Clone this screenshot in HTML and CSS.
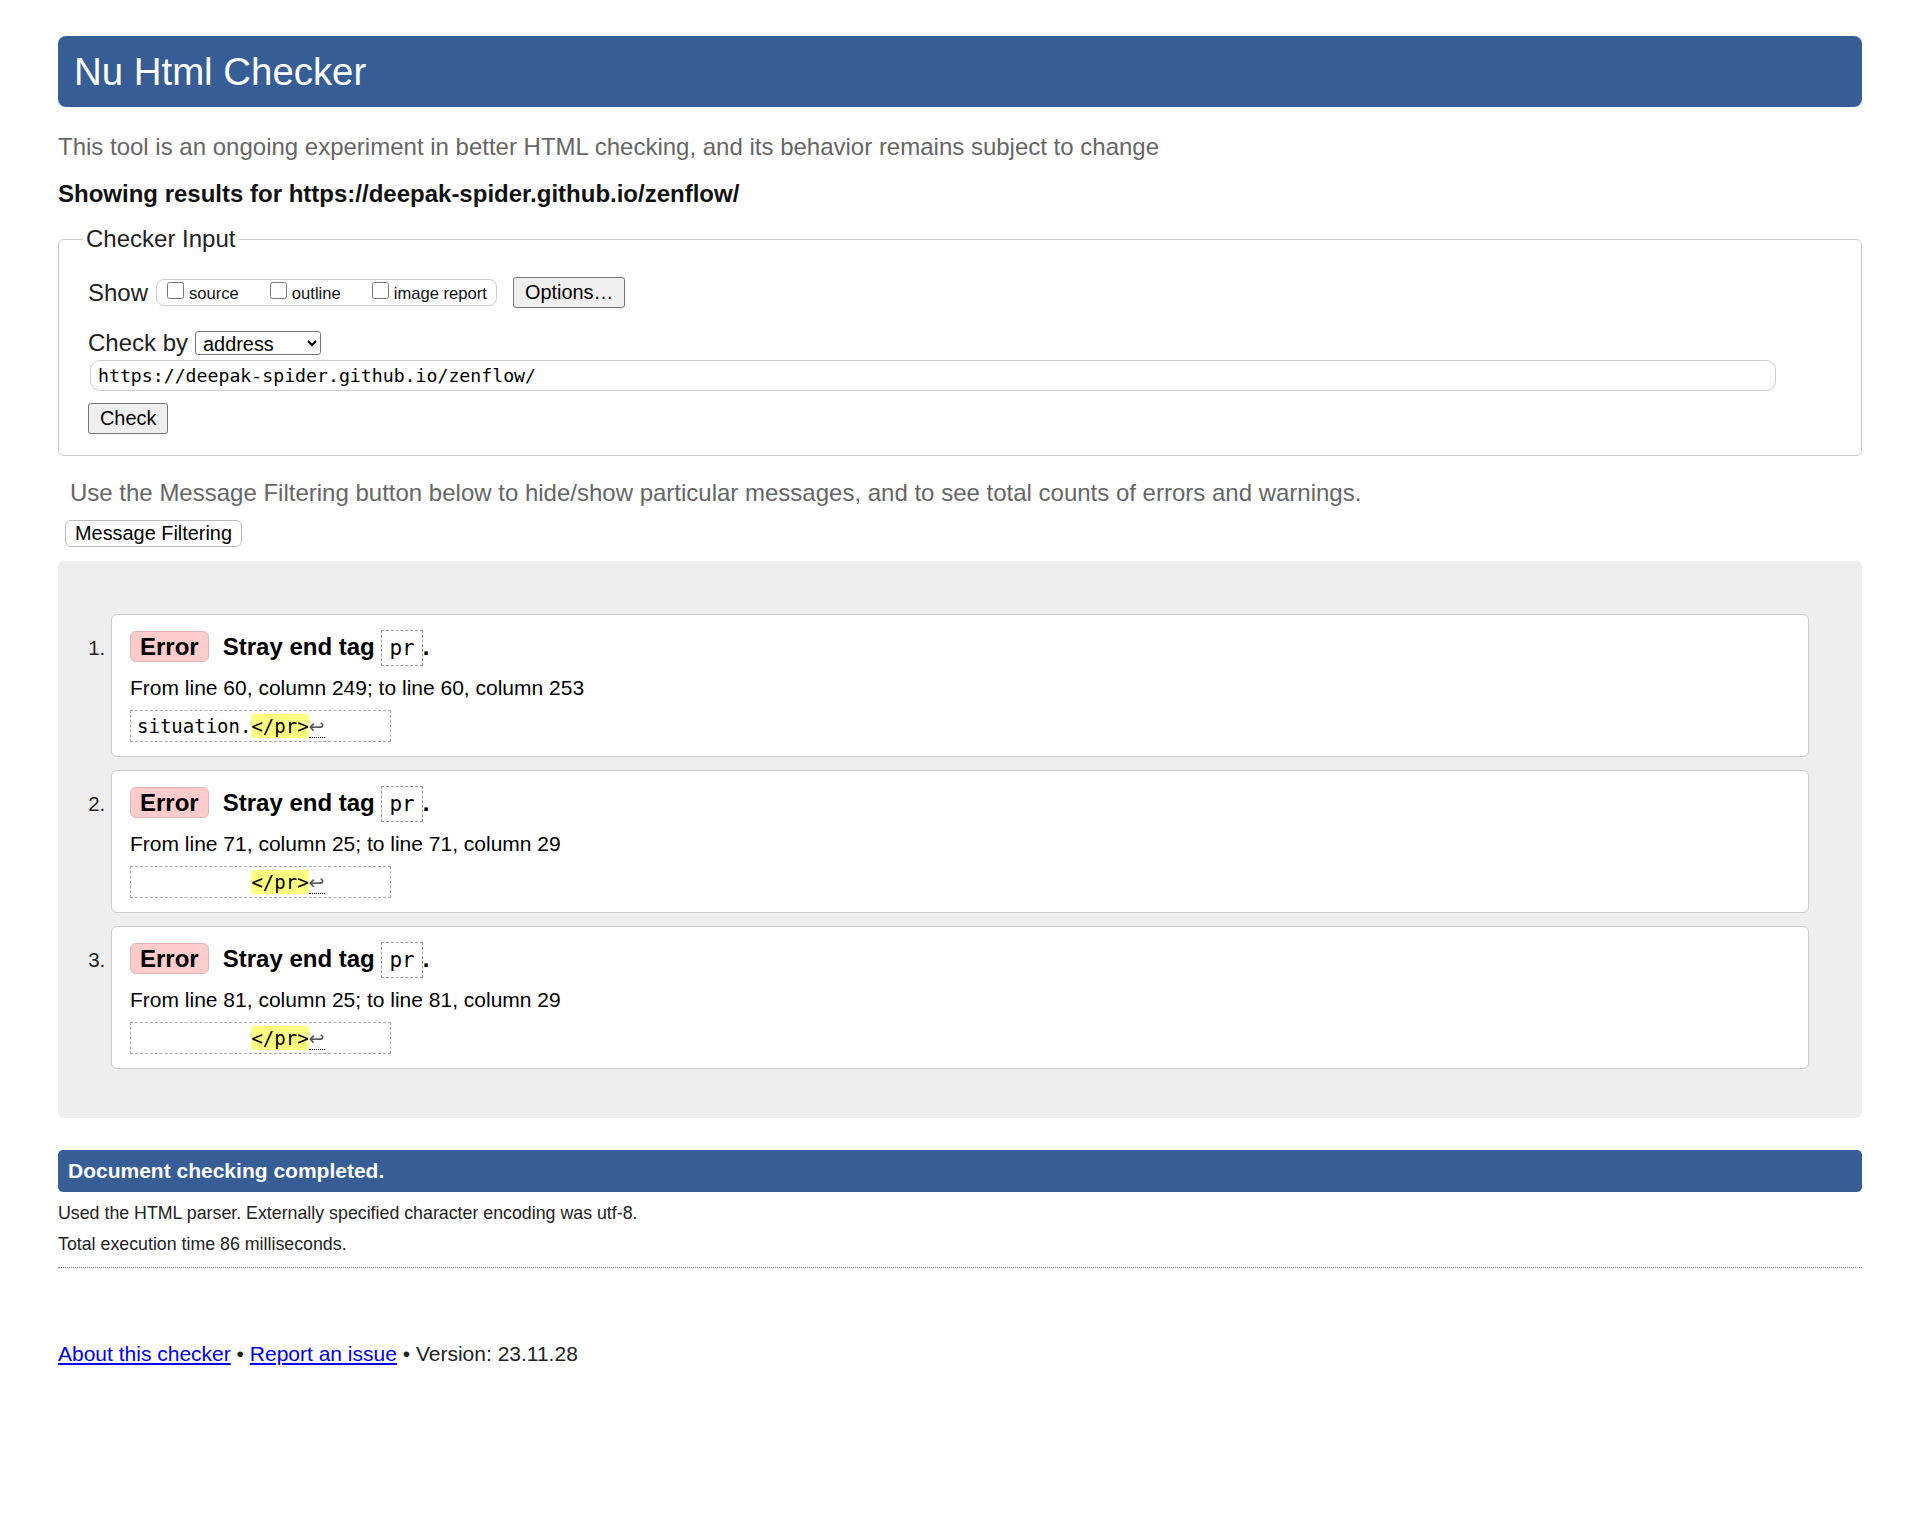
FILE: index.html
```html
<!DOCTYPE html>
<html lang="en">
<head>
<meta charset="utf-8">
<title>Showing results for https://deepak-spider.github.io/zenflow/ - Nu Html Checker</title>
<link rel="stylesheet" href="styles.css">
</head>
<body>
<h1 class="title">Nu Html Checker</h1>
<p class="intro">This tool is an ongoing experiment in better HTML checking, and its behavior remains subject to change</p>
<p class="showing">Showing results for https://deepak-spider.github.io/zenflow/</p>
<form class="checker">
<fieldset class="checker-input">
<legend>Checker Input</legend>
<div class="show-row">
<span class="row-label">Show</span>
<span class="show-group"><label class="opt"><input type="checkbox"><span>source</span></label><label class="opt"><input type="checkbox"><span>outline</span></label><label class="opt"><input type="checkbox"><span>image report</span></label></span>
<button type="button" class="btn options">Options…</button>
</div>
<div class="checkby-row">
<span class="row-label">Check by</span>
<select class="docselect"><option>address</option><option>file upload</option><option>text input</option></select>
</div>
<input class="url" type="url" value="https://deepak-spider.github.io/zenflow/">
<div class="check-wrap"><button class="btn check" type="button">Check</button></div>
</fieldset>
</form>
<p class="filter-note">Use the Message Filtering button below to hide/show particular messages, and to see total counts of errors and warnings.</p>
<button type="button" class="filter-btn">Message Filtering</button>
<div class="results">
<ol class="messages">
<li class="msg">
<p class="msg-head"><strong class="badge">Error</strong><span>Stray end tag <code class="tag">pr</code>.</span></p>
<p class="location">From line 60, column 249; to line 60, column 253</p>
<p class="extract"><code>situation.<b class="hl">&lt;/pr&gt;</b><span class="lf">↩</span>     </code></p>
</li>
<li class="msg">
<p class="msg-head"><strong class="badge">Error</strong><span>Stray end tag <code class="tag">pr</code>.</span></p>
<p class="location">From line 71, column 25; to line 71, column 29</p>
<p class="extract"><code>          <b class="hl">&lt;/pr&gt;</b><span class="lf">↩</span>     </code></p>
</li>
<li class="msg">
<p class="msg-head"><strong class="badge">Error</strong><span>Stray end tag <code class="tag">pr</code>.</span></p>
<p class="location">From line 81, column 25; to line 81, column 29</p>
<p class="extract"><code>          <b class="hl">&lt;/pr&gt;</b><span class="lf">↩</span>     </code></p>
</li>
</ol>
</div>
<p class="completed">Document checking completed.</p>
<p class="details">Used the HTML parser. Externally specified character encoding was utf-8.</p>
<p class="details">Total execution time 86 milliseconds.</p>
<hr class="sep">
<p class="footer"><a href="#">About this checker</a> • <a href="#">Report an issue</a> • Version: 23.11.28</p>
</body>
</html>
```

FILE: styles.css
```css
body {
  margin: 0;
  padding: 36px 62px 40px 58px;
  font-family: "Liberation Sans", Arial, sans-serif;
  font-size: 24px;
  color: #222;
  background: #fff;
}

.title {
  margin: 0;
  height: 71px;
  line-height: 71px;
  padding: 0 16px;
  font-size: 38.4px;
  font-weight: normal;
  color: #fff;
  background: #365d95;
  border-radius: 8px;
}

.intro {
  margin: 26px 0 0;
  line-height: 28px;
  color: #666;
}

.showing {
  margin: 19px 0 0;
  line-height: 28px;
  font-weight: bold;
  color: #111;
}

.checker {
  margin: 17px 0 0;
}

.checker-input {
  margin: 0;
  min-width: 0;
  padding: 24px 0 21px 29px;
  border: 1px solid #ccc;
  border-radius: 6px;
}

.checker-input legend {
  padding: 0 3px;
  margin-left: -5px;
  line-height: 28px;
  color: #222;
}

.show-row {
  display: flex;
  align-items: center;
  height: 31px;
}

.row-label {
  line-height: 28px;
}

.show-group {
  display: flex;
  align-items: center;
  box-sizing: border-box;
  height: 27px;
  margin-left: 8px;
  padding: 0 9px 0 6px;
  border: 1px solid #ccc;
  border-radius: 8px;
  font-size: 16.6px;
  color: #111;
}

.opt {
  display: flex;
  align-items: center;
  margin-right: 27px;
}

.opt:last-child {
  margin-right: 0;
}

.opt input {
  width: 17px;
  height: 17px;
  margin: 0 5px 5px 4px;
}

.opt span {
  padding-top: 2px;
  line-height: 19px;
}

.btn {
  box-sizing: border-box;
  height: 31px;
  padding: 0 11px;
  font-family: "Liberation Sans", Arial, sans-serif;
  font-size: 19.9px;
  color: #000;
  background: #efefef;
  border: 1px solid #767676;
  border-radius: 3px;
}

.options {
  margin-left: 16px;
}

.checkby-row {
  display: flex;
  align-items: center;
  height: 24px;
  margin-top: 23px;
}

.docselect {
  box-sizing: border-box;
  margin-left: 7px;
  width: 126px;
  height: 24px;
  padding: 0 0 0 3px;
  font-family: "Liberation Sans", Arial, sans-serif;
  font-size: 19.9px;
  color: #000;
  background: #fff;
  border: 1px solid #767676;
  border-radius: 3px;
}

.url {
  display: block;
  box-sizing: border-box;
  margin: 5px 0 0 2px;
  width: calc(100% - 87px);
  height: 31px;
  padding: 0 7px;
  font-family: "DejaVu Sans Mono", "Liberation Mono", monospace;
  font-size: 18.2px;
  color: #000;
  background: #fff;
  border: 1px solid #ccc;
  border-radius: 10px;
}

.check-wrap {
  margin-top: 12px;
}

.filter-note {
  margin: 23px 0 0 12px;
  line-height: 28px;
  color: #666;
}

.filter-btn {
  display: block;
  box-sizing: border-box;
  margin: 13px 0 0 7px;
  height: 27px;
  padding: 0 9px;
  font-family: "Liberation Sans", Arial, sans-serif;
  font-size: 19.9px;
  color: #000;
  background: #fff;
  border: 1px solid #bbb;
  border-radius: 6px;
}

.results {
  margin-top: 14px;
  padding: 53px 53px 49px 53px;
  background: #eee;
  border-radius: 6px;
}

.messages {
  margin: 0;
  padding: 0;
  list-style: decimal outside;
}

.msg {
  margin-bottom: 13px;
  padding: 14px 18px 14px;
  background: #fff;
  border: 1px solid #ccc;
  border-radius: 6px;
  color: #111;
}

.msg:last-child {
  margin-bottom: 0;
}

.msg::marker {
  font-size: 20.5px;
  color: #222;
}

.msg-head {
  margin: 0;
  height: 36px;
  line-height: 36px;
  font-weight: bold;
  color: #000;
}

.badge {
  display: inline-block;
  margin-right: 14px;
  padding: 0 9px;
  line-height: 29px;
  background: #fcc;
  border: 1px solid #e6b4b4;
  border-radius: 6px;
}

.tag {
  display: inline-block;
  padding: 0 7px;
  font-family: "DejaVu Sans Mono", "Liberation Mono", monospace;
  font-size: 21px;
  font-weight: normal;
  line-height: 34px;
  background: #fff;
  border: 1px dashed #999;
}

.location {
  margin: 10px 0 0;
  font-size: 21px;
  line-height: 26px;
  color: #000;
}

.extract {
  margin: 9px 0 0;
}

.extract code {
  display: block;
  width: fit-content;
  white-space: pre;
  padding: 0 8px 0 6px;
  font-family: "DejaVu Sans Mono", "Liberation Mono", monospace;
  font-size: 19px;
  line-height: 30px;
  color: #000;
  border: 1px dashed #aaa;
}

.hl {
  font-weight: normal;
  padding: 1px 0;
  background: #ffff80;
}

.lf {
  font-family: "DejaVu Sans", sans-serif;
  color: #555;
  border-bottom: 1px dotted #000;
}

.completed {
  margin: 32px 0 0;
  height: 42px;
  line-height: 42px;
  padding: 0 10px;
  font-size: 21px;
  font-weight: bold;
  color: #fff;
  background: #365d95;
  border-radius: 5px;
}

.details {
  margin: 9.5px 0 0;
  font-size: 17.8px;
  line-height: 22px;
  color: #222;
}

.sep {
  margin: 12px 0 0;
  height: 0;
  border: 0;
  border-top: 1px dotted #888;
}

.footer {
  margin: 73px 0 0;
  font-size: 21px;
  line-height: 26px;
  color: #222;
}

.footer a {
  color: #00e;
}
```
